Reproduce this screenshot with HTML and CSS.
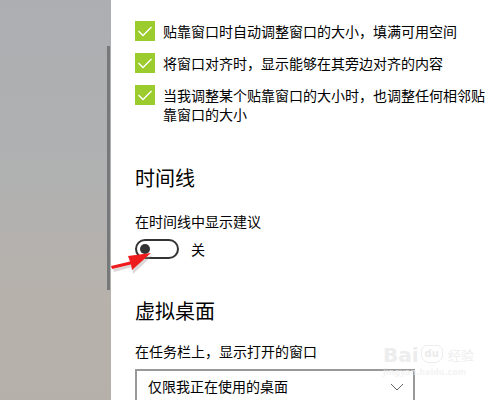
FILE: index.html
```html
<!DOCTYPE html>
<html lang="zh-CN">
<head>
<meta charset="utf-8">
<link rel="stylesheet" href="styles.css">
</head>
<body>
<div class="page">
  <aside class="side">
    <div class="scrollbar"></div>
  </aside>
  <main class="main">
    <div class="checks">
      <div class="check-row">
        <span class="box"><svg viewBox="0 0 20 20" width="20" height="20"><polyline points="3.5,10 8,14.5 16.5,6" fill="none" stroke="#fff" stroke-width="1.4"/></svg></span>
        <span class="check-text">贴靠窗口时自动调整窗口的大小，填满可用空间</span>
      </div>
      <div class="check-row">
        <span class="box"><svg viewBox="0 0 20 20" width="20" height="20"><polyline points="3.5,10 8,14.5 16.5,6" fill="none" stroke="#fff" stroke-width="1.4"/></svg></span>
        <span class="check-text">将窗口对齐时，显示能够在其旁边对齐的内容</span>
      </div>
      <div class="check-row">
        <span class="box"><svg viewBox="0 0 20 20" width="20" height="20"><polyline points="3.5,10 8,14.5 16.5,6" fill="none" stroke="#fff" stroke-width="1.4"/></svg></span>
        <span class="check-text">当我调整某个贴靠窗口的大小时，也调整任何相邻贴靠窗口的大小</span>
      </div>
    </div>

    <h2 class="heading h-timeline">时间线</h2>
    <div class="label">在时间线中显示建议</div>
    <div class="toggle-row">
      <span class="toggle"><span class="knob"></span></span>
      <span class="toggle-text">关</span>
    </div>

    <h2 class="heading h-desk">虚拟桌面</h2>
    <div class="label">在任务栏上，显示打开的窗口</div>
    <div class="select">
      <span class="select-text">仅限我正在使用的桌面</span>
      <svg class="chev" viewBox="0 0 14 8" width="14" height="8"><polyline points="1,1 7,7 13,1" fill="none" stroke="#666" stroke-width="1"/></svg>
    </div>
  </main>

  <svg class="arrow" viewBox="0 0 60 30" width="60" height="30">
    <polygon points="2,22 20,17.5 19,14 42,8 22,27 21,20 3,25" fill="#9a8f8f" opacity="0.35" transform="translate(1,2)"/>
    <polygon points="1,21 20,16.5 18,11 41,8 22,25 21,19.5 2,24" fill="#ee1c1c"/>
  </svg>

  <div class="watermark">
    <div class="wm-top"><span class="wm-bai">Bai</span><span class="wm-paw">du</span><span class="wm-jy">经验</span></div>
    <div class="wm-url">jingyan.baidu.com</div>
  </div>
</div>
</body>
</html>
```

FILE: styles.css
```css
html, body {
  margin: 0;
  padding: 0;
  background: #fff;
}
body {
  font-family: "Noto Sans CJK SC", "Noto Sans", sans-serif;
  color: #000;
}
.page {
  position: relative;
  display: flex;
  width: 500px;
  height: 400px;
  overflow: hidden;
}
.side {
  width: 111px;
  flex: none;
  height: 400px;
  background: linear-gradient(180deg, #acaeb1 0%, #b0b1b1 45%, #b7b1ab 75%, #b5b0aa 100%);
  display: flex;
  flex-direction: column;
  align-items: flex-end;
}
.scrollbar {
  margin-top: 46px;
  margin-right: 1px;
  width: 3px;
  height: 244px;
  background: #777879;
}
.main {
  flex: 1;
  padding: 21px 0 0 24px;
}
.checks {
  display: flex;
  flex-direction: column;
  gap: 12px;
  width: 356px;
}
.check-row {
  display: flex;
  align-items: flex-start;
  gap: 8px;
}
.box {
  flex: none;
  width: 20px;
  height: 20px;
  background: #9ccb2e;
  display: flex;
}
.check-text {
  font-size: 14px;
  line-height: 19px;
  padding-top: 1px;
  width: 328px;
}
.heading {
  margin: 0;
  font-size: 20px;
  font-weight: 400;
  line-height: 28px;
}
.h-timeline {
  margin-top: 40px;
}
.h-desk {
  margin-top: 38px;
}
.label {
  font-size: 14px;
  line-height: 20px;
  margin-top: 19px;
}
.h-desk + .label {
  margin-top: 16px;
}
.toggle-row {
  display: flex;
  align-items: center;
  gap: 12px;
  margin-top: 8px;
}
.toggle {
  box-sizing: border-box;
  width: 44px;
  height: 20px;
  border: 2px solid #333;
  border-radius: 10px;
  display: flex;
  align-items: center;
  padding-left: 3px;
}
.knob {
  width: 10px;
  height: 10px;
  border-radius: 50%;
  background: #333;
}
.toggle-text {
  font-size: 14px;
  line-height: 20px;
}
.select {
  box-sizing: border-box;
  margin-top: 8px;
  width: 280px;
  height: 34px;
  border: 2px solid #999;
  display: flex;
  align-items: center;
  justify-content: space-between;
  padding: 0 9px 0 11px;
}
.select-text {
  font-size: 14px;
  line-height: 20px;
}
.chev {
  margin-top: 1px;
}
.arrow {
  position: absolute;
  left: 110px;
  top: 245px;
}
.watermark {
  position: absolute;
  left: 383px;
  top: 344px;
  font-family: "DejaVu Sans", sans-serif;
  opacity: 0.7;
}
.wm-top {
  display: flex;
  align-items: flex-end;
  gap: 2px;
}
.wm-bai {
  font-size: 20px;
  font-weight: 700;
  line-height: 22px;
  color: #e6e6e6;
}
.wm-paw {
  font-size: 10px;
  font-weight: 700;
  line-height: 12px;
  border: 1px solid #e6e6e6;
  border-radius: 6px 6px 8px 8px;
  padding: 2px 3px;
  margin-bottom: 3px;
  color: #e3e3e3;
}
.wm-jy {
  font-family: "Noto Sans CJK SC", sans-serif;
  font-size: 13px;
  line-height: 18px;
  margin-left: 3px;
  margin-bottom: 2px;
  color: #e8e8e8;
}
.wm-url {
  font-size: 8px;
  font-weight: 700;
  line-height: 12px;
  color: #efefef;
  margin-top: 1px;
}
```
